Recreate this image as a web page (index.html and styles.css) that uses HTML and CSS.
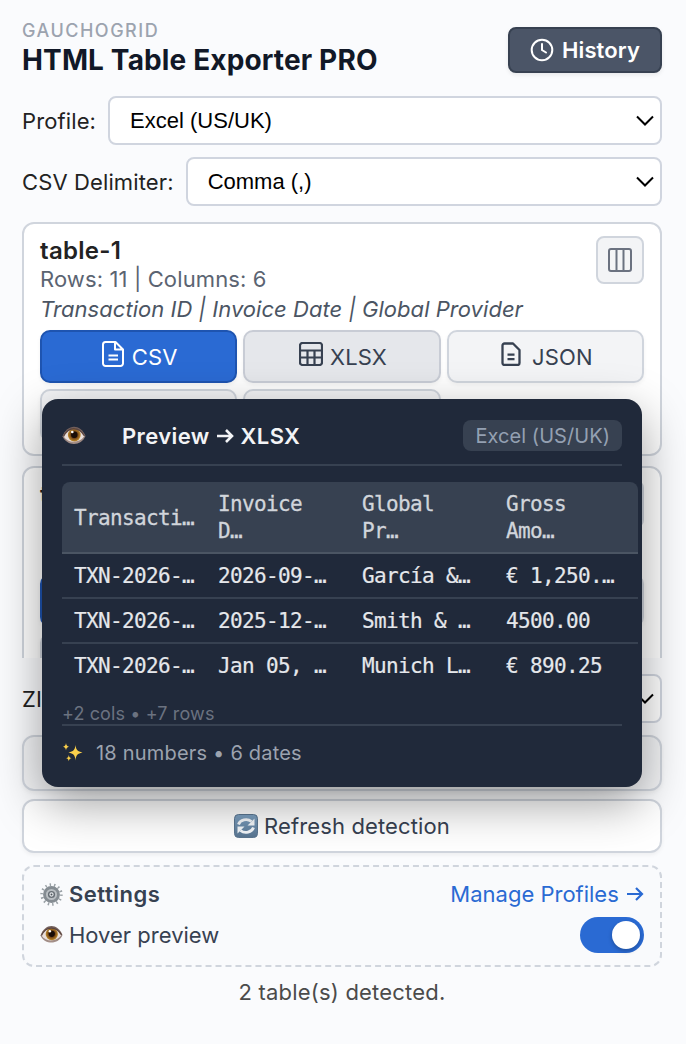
FILE: index.html
```html
<!DOCTYPE html>
<html lang="en">
<head>
    <meta charset="UTF-8">
    <meta name="viewport" content="width=device-width, initial-scale=1.0">
    <title>HTML Table Exporter PRO</title>
    <link rel="stylesheet" href="styles.css">
</head>
<body>
    <!-- Shared icons -->
    <svg class="sprite" width="0" height="0" aria-hidden="true">
        <defs>
            <radialGradient id="iris"><stop offset="0.35" stop-color="#1d0f08"/><stop offset="0.5" stop-color="#6b3d14"/><stop offset="1" stop-color="#c08b2c"/></radialGradient>
            <linearGradient id="lid" x1="0" y1="0" x2="0" y2="1"><stop offset="0" stop-color="#6f5c58"/><stop offset="1" stop-color="#a8938c"/></linearGradient>
            <linearGradient id="tile" x1="0" y1="0" x2="0" y2="1"><stop offset="0" stop-color="#7fa3c4"/><stop offset="1" stop-color="#587591"/></linearGradient>
            <symbol id="eye" viewBox="0 0 24 20">
                <path d="M.5 10.500C5-2 18-3 23.500 10c-4 10-18 11-23 .5z" fill="url(#lid)"/>
                <path d="M1.500 10.500C6 1 17 0 22.500 10c-4.500 7-16 8-21 .5z" fill="#e9dfdb"/>
                <circle cx="12.300" cy="9" r="6.400" fill="url(#iris)"/>
                <circle cx="12.300" cy="8.800" r="3.200" fill="#190c07"/>
                <circle cx="10.300" cy="6" r="1.300" fill="#fff"/>
                <path d="M1.500 10.500C6 .5 17 0 22.500 10" fill="none" stroke="#5b4540" stroke-width="1.300"/>
            </symbol>
            <symbol id="file" viewBox="0 0 24 28">
                <path d="M2 4.500A2.500 2.500 0 0 1 4.500 2H14.500l7.500 7.500v14a2.500 2.500 0 0 1-2.500 2.500h-15A2.500 2.500 0 0 1 2 23.500zM14 2v7.500h8M7.500 15.500h9.500M7.500 19.500h9.500"/>
            </symbol>
            <symbol id="grid" viewBox="0 0 24 24">
                <path d="M3.500 1h17A2.500 2.500 0 0 1 23 3.500v17a2.500 2.500 0 0 1-2.500 2.500h-17A2.500 2.500 0 0 1 1 20.500v-17A2.500 2.500 0 0 1 3.500 1zM1 8.500h22M1 15.500h22M8.500 8.500V23M15.500 8.500V23"/>
            </symbol>
            <symbol id="doc" viewBox="0 0 20 24">
                <path d="M1.500 3.500A2 2 0 0 1 3.500 1.500h8.500l6.500 6.500v13a2 2 0 0 1-2 2h-13a2 2 0 0 1-2-2zM6.500 12.700h7M6.500 17.200h7"/>
            </symbol>
            <symbol id="columns" viewBox="0 0 24 24">
                <path d="M3 1h18a2 2 0 0 1 2 2v18a2 2 0 0 1-2 2H3a2 2 0 0 1-2-2V3a2 2 0 0 1 2-2zM8.500 1v22M15.500 1v22"/>
            </symbol>
            <symbol id="chevron" viewBox="0 0 18 11"><path d="M1 1.500l8 8 8-8"/></symbol>
        </defs>
    </svg>

    <div class="popup">
        <header class="header">
            <div>
                <div class="brand">GAUCHOGRID</div>
                <h1 class="title">HTML Table Exporter PRO</h1>
            </div>
            <button class="history-btn">
                <svg width="24" height="24" viewBox="0 0 24 24"><circle cx="12" cy="12" r="10.300"/><path d="M12 6v6l4 2.500"/></svg>
                History
            </button>
        </header>

        <div class="field">
            <label for="profile">Profile:</label>
            <div class="select-wrap">
                <select id="profile"><option>Excel (US/UK)</option></select>
                <svg class="chevron"><use href="#chevron"/></svg>
            </div>
        </div>
        <div class="field">
            <label for="delimiter">CSV Delimiter:</label>
            <div class="select-wrap">
                <select id="delimiter"><option>Comma (,)</option></select>
                <svg class="chevron"><use href="#chevron"/></svg>
            </div>
        </div>

        <div class="table-list">
            <section class="card">
                <div class="card-head">
                    <div>
                        <div class="card-name">table-1</div>
                        <div class="card-meta">Rows: 11 | Columns: 6</div>
                        <div class="card-cols">Transaction ID | Invoice Date | Global Provider</div>
                    </div>
                    <button class="columns-btn"><svg class="icon" width="24" height="24"><use href="#columns"/></svg></button>
                </div>
                <div class="formats">
                    <button class="btn primary"><svg class="icon file"><use href="#file"/></svg>CSV</button>
                    <button class="btn hovered"><svg class="icon grid"><use href="#grid"/></svg>XLSX</button>
                    <button class="btn"><svg class="icon doc"><use href="#doc"/></svg>JSON</button>
                    <button class="btn"></button>
                    <button class="btn"></button>
                </div>
            </section>
            <section class="card">
                <div class="card-head">
                    <div>
                        <div class="card-name">table-2</div>
                        <div class="card-meta"></div>
                        <div class="card-cols"></div>
                    </div>
                    <button class="columns-btn"></button>
                </div>
                <div class="formats">
                    <button class="btn primary"></button>
                    <button class="btn"></button>
                    <button class="btn"></button>
                    <button class="btn"></button>
                    <button class="btn"></button>
                </div>
            </section>
        </div>

        <div class="field zip">
            <label for="zip">ZIP:</label>
            <div class="select-wrap">
                <select id="zip"></select>
                <svg class="chevron"><use href="#chevron"/></svg>
            </div>
        </div>

        <button class="wide-btn muted"></button>
        <button class="wide-btn">
            <svg width="24" height="24" viewBox="0 0 24 24">
                <rect x=".5" y=".5" width="23" height="23" rx="4" fill="url(#tile)" stroke="#5b7690"/>
                <path d="M4.500 10.500a7.800 6.500 0 0 1 13-3M19.500 13.500a7.800 6.500 0 0 1-13 3" fill="none" stroke="#f4f7fa" stroke-width="2.800"/>
                <path d="M20.500 4.500v7h-7zM3.500 19.500v-7h7z" fill="#f4f7fa"/>
            </svg>
            Refresh detection
        </button>

        <section class="settings">
            <div class="settings-row">
                <span class="settings-title">
                    <svg width="23" height="23" viewBox="0 0 24 24">
                        <circle cx="12" cy="12" r="10.200" fill="none" stroke="#9aa1a6" stroke-width="3" stroke-dasharray="1.500 3.080"/>
                        <circle cx="12" cy="12" r="7.300" fill="#b9bec2" stroke="#858c92" stroke-width="3"/>
                        <circle cx="12" cy="12" r="3" fill="#e5e8ea" stroke="#666d74" stroke-width="1.500"/>
                        <circle cx="12" cy="12" r="1" fill="#4b5259"/>
                    </svg>
                    Settings
                </span>
                <a class="manage">Manage Profiles <svg width="18" height="16" viewBox="0 0 18 16"><path d="M1 8h15M10 2l6 6-6 6"/></svg></a>
            </div>
            <div class="settings-row">
                <span class="settings-label"><svg width="23" height="20"><use href="#eye"/></svg>Hover preview</span>
                <span class="toggle"><span class="knob"></span></span>
            </div>
        </section>

        <div class="status">2 table(s) detected.</div>
    </div>

    <!-- Hover preview -->
    <div class="preview">
        <div class="preview-head">
            <svg width="24" height="20"><use href="#eye"/></svg>
            <span class="preview-title">Preview <svg width="18" height="16" viewBox="0 0 18 16"><path d="M1 8h15M10 2l6 6-6 6"/></svg> XLSX</span>
            <span class="preview-tag">Excel (US/UK)</span>
        </div>
        <table class="preview-table">
            <thead>
                <tr><th>Transacti…</th><th>Invoice D…</th><th>Global Pr…</th><th>Gross Amo…</th></tr>
            </thead>
            <tbody>
                <tr><td>TXN-2026-…</td><td>2026-09-…</td><td>García &amp;…</td><td>€ 1,250.…</td></tr>
                <tr><td>TXN-2026-…</td><td>2025-12-…</td><td>Smith &amp; …</td><td>4500.00</td></tr>
                <tr><td>TXN-2026-…</td><td>Jan 05, …</td><td>Munich L…</td><td>€ 890.25</td></tr>
            </tbody>
        </table>
        <div class="preview-more">+2 cols • +7 rows</div>
        <div class="preview-stats">
            <svg width="22" height="22" viewBox="0 0 22 22" fill="#fbd04b">
                <path d="M13.500 3c.6 5 2 6.500 7 7.500-5 1-6.400 2.500-7 8-.6-5.500-2-7-7-8 5-1 6.400-2.500 7-7.500z"/>
                <path d="M4 1c.3 2.500 1 3.200 3 3.700C5 5.200 4.300 6 4 8.500 3.700 6 3 5.200 1 4.700 3 4.200 3.700 3.500 4 1zM6.800 13c.3 2 .9 2.700 2.700 3.200-1.800.4-2.400 1-2.700 3-.3-2-.9-2.600-2.700-3 1.800-.5 2.400-1.200 2.700-3.200z"/>
            </svg>
            18 numbers • 6 dates
        </div>
    </div>
</body>
</html>
```

FILE: styles.css
```css
* {
    box-sizing: border-box;
}
body {
    margin: 0;
    width: 686px;
    height: 1044px;
    overflow: hidden;
    background: #fafbfd;
    color: #222;
    font-family: Inter, "Liberation Sans", sans-serif;
    font-size: 22px;
    letter-spacing: 0.12px;
}
button {
    font: inherit;
    letter-spacing: inherit;
    color: inherit;
}
.sprite {
    display: block;
}
.popup {
    padding: 22px 24px 0 22px;
}
.header {
    display: flex;
    justify-content: space-between;
    height: 74px;
}
.brand {
    font-size: 18px;
    line-height: 18px;
    font-weight: 500;
    letter-spacing: 1.5px;
    color: #9ca3af;
}
.title {
    margin: 3px 0 0;
    font-size: 28px;
    line-height: 34px;
    font-weight: 700;
    letter-spacing: 0.14px;
    color: #111827;
}
.history-btn {
    display: flex;
    align-items: center;
    gap: 8px;
    width: 154px;
    height: 46px;
    margin-top: 5px;
    padding: 0 20px;
    border: 2px solid #374151;
    border-radius: 8px;
    background: #4b5567;
    color: #fff;
    font-weight: 600;
    box-shadow: 0 2px 4px rgba(0,0,0,0.08);
}
.history-btn svg {
    flex: none;
    fill: none;
    stroke: #fff;
    stroke-width: 2;
    stroke-linecap: round;
}
.field {
    display: flex;
    align-items: center;
    gap: 12px;
    height: 49px;
    margin-bottom: 12px;
}
.select-wrap {
    position: relative;
    flex: 1;
    height: 49px;
}
.select-wrap select {
    appearance: none;
    width: 100%;
    height: 100%;
    padding: 0 20px 1px;
    border: 2px solid #d0d5df;
    border-radius: 8px;
    background: #fff;
    color: #000;
    font-family: "Liberation Sans", Arial, sans-serif;
    font-size: 22px;
}
.chevron {
    position: absolute;
    right: 8px;
    top: 19px;
    width: 18px;
    height: 11px;
    fill: none;
    stroke: #000;
    stroke-width: 2;
}
.table-list {
    height: 440px;
    margin: 0 0 12px;
    padding-top: 4px;
    overflow: hidden;
}
.card {
    height: 234px;
    margin-bottom: 10px;
    padding: 12px 16px;
    border: 2px solid #d0d5dd;
    border-radius: 12px;
    background: #fff;
}
.card-head {
    display: flex;
    justify-content: space-between;
    height: 94px;
}
.card-name {
    font-size: 24px;
    line-height: 29px;
    font-weight: 600;
    letter-spacing: 0.3px;
}
.card-meta {
    line-height: 29px;
    color: #5b6472;
}
.card-cols {
    line-height: 30px;
    font-style: italic;
    letter-spacing: 0.04px;
    color: #4b5563;
}
.columns-btn {
    display: flex;
    align-items: center;
    justify-content: center;
    width: 48px;
    height: 48px;
    border: 2px solid #d0d5dd;
    border-radius: 8px;
    background: #f3f4f6;
    color: #6b7280;
}
.icon {
    flex: none;
    fill: none;
    stroke: currentColor;
    stroke-width: 2;
    stroke-linejoin: round;
}
.icon.file {
    width: 24px;
    height: 28px;
    margin-top: -6px;
}
.icon.grid {
    width: 24px;
    height: 24px;
    margin-top: -6px;
    stroke-width: 2.2;
}
.icon.doc {
    width: 20px;
    height: 24px;
    margin: -6px 4px 0 2px;
    stroke-width: 2.3;
}
.formats {
    display: grid;
    grid-template-columns: repeat(3, 1fr);
    grid-auto-rows: 53px;
    gap: 6px;
}
.btn {
    display: flex;
    align-items: center;
    justify-content: center;
    gap: 7px;
    padding: 0 0 0 1px;
    border: 2px solid #d0d5dd;
    border-radius: 10px;
    background: #f3f4f6;
    color: #374151;
    box-shadow: 0 2px 4px rgba(0,0,0,0.05);
}
.btn.hovered {
    padding-left: 2px;
    border-color: #c8ccd5;
    background: #e5e7eb;
}
.btn.primary {
    border-color: #1e54b0;
    background: #2a6ad3;
    color: #fff;
}
.field.zip {
    padding-top: 4px;
    height: 53px;
}
.wide-btn {
    display: flex;
    align-items: center;
    justify-content: center;
    gap: 6px;
    width: 640px;
    height: 54px;
    margin-bottom: 12px;
    border: 2px solid #d0d5dd;
    border-radius: 12px;
    background: #fff;
    color: #374151;
    box-shadow: 0 2px 4px rgba(0,0,0,0.05);
}
.wide-btn.muted {
    height: 56px;
    margin-bottom: 8px;
    background: #f3f4f6;
}
.settings {
    display: flex;
    flex-direction: column;
    gap: 5px;
    height: 102px;
    padding: 9px 16px;
    border: 2px dashed #d0d5dd;
    border-radius: 12px;
    background: #f9fafc;
    color: #374151;
}
.settings-row {
    display: flex;
    align-items: center;
    justify-content: space-between;
    height: 36px;
}
.settings-title,
.settings-label {
    display: flex;
    align-items: center;
    gap: 6px;
}
.settings-title {
    font-weight: 600;
    letter-spacing: 0.5px;
}
.settings-label {
    letter-spacing: 0;
}
.manage {
    color: #2a6ad3;
    letter-spacing: 0;
}
.manage svg,
.preview-title svg {
    fill: none;
    stroke: currentColor;
    stroke-width: 2.2;
}
.manage svg {
    margin-left: 1px;
}
.preview-title svg {
    margin-right: 1px;
    stroke-width: 2.6;
}
.toggle {
    display: flex;
    justify-content: flex-end;
    width: 64px;
    height: 36px;
    padding: 4px;
    border-radius: 18px;
    background: #2a6ad3;
}
.knob {
    width: 28px;
    height: 28px;
    border-radius: 50%;
    background: #fff;
    box-shadow: 0 2px 4px rgba(0,0,0,0.25);
}
.status {
    margin-top: 10px;
    line-height: 30px;
    text-align: center;
    letter-spacing: 0.2px;
    color: #4b4b4b;
}

/* Floating preview */
.preview {
    position: absolute;
    left: 42px;
    top: 399px;
    width: 600px;
    height: 388px;
    padding: 20px;
    border-radius: 16px;
    background: #20293a;
    color: #f3f4f6;
    box-shadow: 0 16px 48px rgba(0,0,0,0.38);
}
.preview-head {
    display: flex;
    align-items: center;
    height: 47px;
    padding-bottom: 12px;
    border-bottom: 2px solid #374151;
}
.preview-title {
    flex: 1;
    margin-left: 36px;
    font-weight: 600;
    letter-spacing: 0.4px;
}
.preview-tag {
    height: 31px;
    padding: 1px 12px 0;
    border-radius: 8px;
    background: #374151;
    color: #94a0b2;
    font-size: 20px;
    line-height: 31px;
    letter-spacing: 0.05px;
}
.preview-table {
    width: 576px;
    margin-top: 16px;
    border-collapse: separate;
    border-spacing: 0;
    table-layout: fixed;
    font-family: "DejaVu Sans Mono", monospace;
    font-size: 21px;
    letter-spacing: -0.65px;
    text-align: left;
}
.preview-table th {
    height: 72px;
    padding: 2px 12px 0;
    border-bottom: 2px solid #4b5563;
    background: #374151;
    color: #d1d5db;
    font-weight: 400;
    line-height: 27px;
    -webkit-text-stroke: 0.3px #d1d5db;
}
.preview-table th + th {
    padding-right: 20px;
}
.preview-table th:first-child {
    border-top-left-radius: 8px;
}
.preview-table th:last-child {
    border-top-right-radius: 8px;
}
.preview-table td {
    height: 45px;
    padding: 0 12px;
    border-bottom: 2px solid #374151;
    color: #e5e7eb;
    white-space: nowrap;
    -webkit-text-stroke: 0.2px #e5e7eb;
}
.preview-table tr:last-child td {
    padding-bottom: 2px;
    border-bottom: none;
}
.preview-more {
    height: 37px;
    padding-top: 13px;
    border-bottom: 2px solid #374151;
    color: #6b7280;
    font-size: 18px;
    line-height: 24px;
}
.preview-stats {
    display: flex;
    align-items: center;
    gap: 12px;
    height: 54px;
    color: #9ca3af;
    font-size: 20px;
    letter-spacing: 0.2px;
}
```
